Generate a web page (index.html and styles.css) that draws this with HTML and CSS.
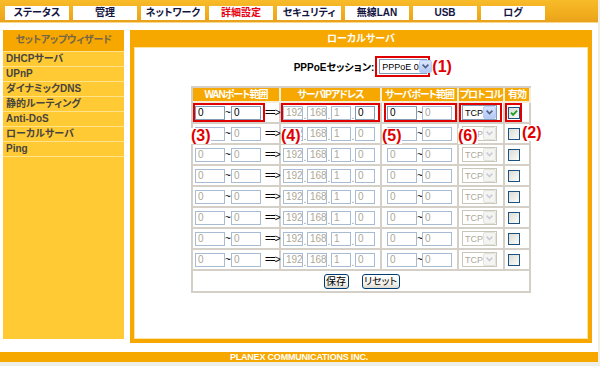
FILE: index.html
```html
<!DOCTYPE html>
<html lang="ja">
<head>
<meta charset="utf-8">
<title>ローカルサーバ</title>
<link rel="stylesheet" href="styles.css">
</head>
<body>
<div class="page">
  <header class="topbar">
    <nav class="tabs">
      <span class="tab">ステータス</span>
      <span class="tab">管理</span>
      <span class="tab">ネットワーク</span>
      <span class="tab on">詳細設定</span>
      <span class="tab">セキュリティ</span>
      <span class="tab">無線LAN</span>
      <span class="tab">USB</span>
      <span class="tab">ログ</span>
    </nav>
  </header>

  <div class="main">
    <aside class="sidebar">
      <div class="side-head">セットアップウィザード</div>
      <div class="side-item">DHCPサーバ</div>
      <div class="side-item">UPnP</div>
      <div class="side-item">ダイナミックDNS</div>
      <div class="side-item">静的ルーティング</div>
      <div class="side-item">Anti-DoS</div>
      <div class="side-item">ローカルサーバ</div>
      <div class="side-item">Ping</div>
      <div class="side-item"></div>
    </aside>

    <section class="panel">
      <div class="panel-head">ローカルサーバ</div>
      <div class="panel-body">
        <div class="session">
          <span class="session-label">PPPoEセッション:</span>
          <span class="grp red sess">
            <span class="sel w48"><span class="sel-t">PPPoE 0</span><span class="sel-b"><svg width="7" height="5" viewBox="0 0 7 5"><path d="M0.6 0.6 L3.5 3.5 L6.4 0.6" fill="none" stroke="#4d6185" stroke-width="1.6"/></svg></span></span>
            <span class="anno a1">(1)</span>
          </span>
        </div>

        <div class="tbl-wrap">
          <table class="tbl">
            <colgroup>
              <col class="c-wan"><col class="c-ip"><col class="c-port"><col class="c-proto"><col class="c-en">
            </colgroup>
            <thead>
              <tr>
                <th>WANポート範囲</th>
                <th>サーバIPアドレス</th>
                <th>サーバポート範囲</th>
                <th>プロトコル</th>
                <th>有効</th>
              </tr>
            </thead>
            <tbody>
              <tr>
                <td><div class="cell"><span class="grp wan red"><input class="f w30" value="0"><span class="tl">~</span><input class="f w30" value="0"></span><span class="arr">==&gt;</span></div></td>
                <td><div class="cell"><span class="grp ip red"><input class="f w20 dis" value="192" disabled><span class="dot">.</span><input class="f w20 dis" value="168" disabled><span class="dot">.</span><input class="f w20 dis" value="1" disabled><span class="dot">.</span><input class="f w20" value="0"></span></div></td>
                <td><div class="cell"><span class="grp pt red"><input class="f w30" value="0"><span class="tl">~</span><input class="f w30 dis" value="0" disabled></span></div></td>
                <td><div class="cell"><span class="grp pr red"><span class="sel w35"><span class="sel-t">TCP</span><span class="sel-b"><svg width="7" height="5" viewBox="0 0 7 5"><path d="M0.6 0.6 L3.5 3.5 L6.4 0.6" fill="none" stroke="#4d6185" stroke-width="1.6"/></svg></span></span></span></div></td>
                <td><div class="cell"><span class="grp cbg red"><span class="cb"><svg width="10" height="10" viewBox="0 0 10 10"><path d="M2 4.6 L4.1 6.8 L8 2.6" fill="none" stroke="#21a121" stroke-width="1.9"/></svg></span></span></div></td>
              </tr>
              <tr>
                <td><div class="cell"><span class="grp wan"><input class="f w30 dis" value="0" disabled><span class="tl">~</span><input class="f w30 dis" value="0" disabled></span><span class="arr">==&gt;</span></div></td>
                <td><div class="cell"><span class="grp ip"><input class="f w20 dis" value="192" disabled><span class="dot">.</span><input class="f w20 dis" value="168" disabled><span class="dot">.</span><input class="f w20 dis" value="1" disabled><span class="dot">.</span><input class="f w20 dis" value="0" disabled></span></div></td>
                <td><div class="cell"><span class="grp pt"><input class="f w30 dis" value="0" disabled><span class="tl">~</span><input class="f w30 dis" value="0" disabled></span></div></td>
                <td><div class="cell"><span class="grp pr"><span class="sel w35 dis"><span class="sel-t">TCP</span><span class="sel-b"><svg width="7" height="5" viewBox="0 0 7 5"><path d="M0.6 0.6 L3.5 3.5 L6.4 0.6" fill="none" stroke="#c9ccd6" stroke-width="1.6"/></svg></span></span></span></div></td>
                <td><div class="cell"><span class="grp cbg"><span class="cb"></span></span></div></td>
              </tr>
              <tr>
                <td><div class="cell"><span class="grp wan"><input class="f w30 dis" value="0" disabled><span class="tl">~</span><input class="f w30 dis" value="0" disabled></span><span class="arr">==&gt;</span></div></td>
                <td><div class="cell"><span class="grp ip"><input class="f w20 dis" value="192" disabled><span class="dot">.</span><input class="f w20 dis" value="168" disabled><span class="dot">.</span><input class="f w20 dis" value="1" disabled><span class="dot">.</span><input class="f w20 dis" value="0" disabled></span></div></td>
                <td><div class="cell"><span class="grp pt"><input class="f w30 dis" value="0" disabled><span class="tl">~</span><input class="f w30 dis" value="0" disabled></span></div></td>
                <td><div class="cell"><span class="grp pr"><span class="sel w35 dis"><span class="sel-t">TCP</span><span class="sel-b"><svg width="7" height="5" viewBox="0 0 7 5"><path d="M0.6 0.6 L3.5 3.5 L6.4 0.6" fill="none" stroke="#c9ccd6" stroke-width="1.6"/></svg></span></span></span></div></td>
                <td><div class="cell"><span class="grp cbg"><span class="cb"></span></span></div></td>
              </tr>
              <tr>
                <td><div class="cell"><span class="grp wan"><input class="f w30 dis" value="0" disabled><span class="tl">~</span><input class="f w30 dis" value="0" disabled></span><span class="arr">==&gt;</span></div></td>
                <td><div class="cell"><span class="grp ip"><input class="f w20 dis" value="192" disabled><span class="dot">.</span><input class="f w20 dis" value="168" disabled><span class="dot">.</span><input class="f w20 dis" value="1" disabled><span class="dot">.</span><input class="f w20 dis" value="0" disabled></span></div></td>
                <td><div class="cell"><span class="grp pt"><input class="f w30 dis" value="0" disabled><span class="tl">~</span><input class="f w30 dis" value="0" disabled></span></div></td>
                <td><div class="cell"><span class="grp pr"><span class="sel w35 dis"><span class="sel-t">TCP</span><span class="sel-b"><svg width="7" height="5" viewBox="0 0 7 5"><path d="M0.6 0.6 L3.5 3.5 L6.4 0.6" fill="none" stroke="#c9ccd6" stroke-width="1.6"/></svg></span></span></span></div></td>
                <td><div class="cell"><span class="grp cbg"><span class="cb"></span></span></div></td>
              </tr>
              <tr>
                <td><div class="cell"><span class="grp wan"><input class="f w30 dis" value="0" disabled><span class="tl">~</span><input class="f w30 dis" value="0" disabled></span><span class="arr">==&gt;</span></div></td>
                <td><div class="cell"><span class="grp ip"><input class="f w20 dis" value="192" disabled><span class="dot">.</span><input class="f w20 dis" value="168" disabled><span class="dot">.</span><input class="f w20 dis" value="1" disabled><span class="dot">.</span><input class="f w20 dis" value="0" disabled></span></div></td>
                <td><div class="cell"><span class="grp pt"><input class="f w30 dis" value="0" disabled><span class="tl">~</span><input class="f w30 dis" value="0" disabled></span></div></td>
                <td><div class="cell"><span class="grp pr"><span class="sel w35 dis"><span class="sel-t">TCP</span><span class="sel-b"><svg width="7" height="5" viewBox="0 0 7 5"><path d="M0.6 0.6 L3.5 3.5 L6.4 0.6" fill="none" stroke="#c9ccd6" stroke-width="1.6"/></svg></span></span></span></div></td>
                <td><div class="cell"><span class="grp cbg"><span class="cb"></span></span></div></td>
              </tr>
              <tr>
                <td><div class="cell"><span class="grp wan"><input class="f w30 dis" value="0" disabled><span class="tl">~</span><input class="f w30 dis" value="0" disabled></span><span class="arr">==&gt;</span></div></td>
                <td><div class="cell"><span class="grp ip"><input class="f w20 dis" value="192" disabled><span class="dot">.</span><input class="f w20 dis" value="168" disabled><span class="dot">.</span><input class="f w20 dis" value="1" disabled><span class="dot">.</span><input class="f w20 dis" value="0" disabled></span></div></td>
                <td><div class="cell"><span class="grp pt"><input class="f w30 dis" value="0" disabled><span class="tl">~</span><input class="f w30 dis" value="0" disabled></span></div></td>
                <td><div class="cell"><span class="grp pr"><span class="sel w35 dis"><span class="sel-t">TCP</span><span class="sel-b"><svg width="7" height="5" viewBox="0 0 7 5"><path d="M0.6 0.6 L3.5 3.5 L6.4 0.6" fill="none" stroke="#c9ccd6" stroke-width="1.6"/></svg></span></span></span></div></td>
                <td><div class="cell"><span class="grp cbg"><span class="cb"></span></span></div></td>
              </tr>
              <tr>
                <td><div class="cell"><span class="grp wan"><input class="f w30 dis" value="0" disabled><span class="tl">~</span><input class="f w30 dis" value="0" disabled></span><span class="arr">==&gt;</span></div></td>
                <td><div class="cell"><span class="grp ip"><input class="f w20 dis" value="192" disabled><span class="dot">.</span><input class="f w20 dis" value="168" disabled><span class="dot">.</span><input class="f w20 dis" value="1" disabled><span class="dot">.</span><input class="f w20 dis" value="0" disabled></span></div></td>
                <td><div class="cell"><span class="grp pt"><input class="f w30 dis" value="0" disabled><span class="tl">~</span><input class="f w30 dis" value="0" disabled></span></div></td>
                <td><div class="cell"><span class="grp pr"><span class="sel w35 dis"><span class="sel-t">TCP</span><span class="sel-b"><svg width="7" height="5" viewBox="0 0 7 5"><path d="M0.6 0.6 L3.5 3.5 L6.4 0.6" fill="none" stroke="#c9ccd6" stroke-width="1.6"/></svg></span></span></span></div></td>
                <td><div class="cell"><span class="grp cbg"><span class="cb"></span></span></div></td>
              </tr>
              <tr>
                <td><div class="cell"><span class="grp wan"><input class="f w30 dis" value="0" disabled><span class="tl">~</span><input class="f w30 dis" value="0" disabled></span><span class="arr">==&gt;</span></div></td>
                <td><div class="cell"><span class="grp ip"><input class="f w20 dis" value="192" disabled><span class="dot">.</span><input class="f w20 dis" value="168" disabled><span class="dot">.</span><input class="f w20 dis" value="1" disabled><span class="dot">.</span><input class="f w20 dis" value="0" disabled></span></div></td>
                <td><div class="cell"><span class="grp pt"><input class="f w30 dis" value="0" disabled><span class="tl">~</span><input class="f w30 dis" value="0" disabled></span></div></td>
                <td><div class="cell"><span class="grp pr"><span class="sel w35 dis"><span class="sel-t">TCP</span><span class="sel-b"><svg width="7" height="5" viewBox="0 0 7 5"><path d="M0.6 0.6 L3.5 3.5 L6.4 0.6" fill="none" stroke="#c9ccd6" stroke-width="1.6"/></svg></span></span></span></div></td>
                <td><div class="cell"><span class="grp cbg"><span class="cb"></span></span></div></td>
              </tr>
              <tr>
                <td colspan="5" class="btn-row"><div class="btns"><span class="btn b-save">保存</span><span class="btn b-reset">リセット</span></div></td>
              </tr>
            </tbody>
          </table>
          <span class="anno a3">(3)</span>
          <span class="anno a4">(4)</span>
          <span class="anno a5">(5)</span>
          <span class="anno a6">(6)</span>
          <span class="anno a2">(2)</span>
        </div>
      </div>
    </section>
  </div>

  <footer class="footer">PLANEX COMMUNICATIONS INC.</footer>
</div>
</body>
</html>
```

FILE: styles.css
```css
* { box-sizing: border-box; }

html { background: #eeeee8; }

body {
  margin: 0;
  font-family: "Liberation Sans", "Noto Sans CJK JP", sans-serif;
  font-size: 10px;
  font-feature-settings: "palt" 1;
  color: #000;
}

.page {
  width: 598px;
  height: 362px;
  background: #fff;
  display: flex;
  flex-direction: column;
}

/* top bar */
.topbar {
  height: 23px;
  background: linear-gradient(#f8bb2a, #f0ab1c 70%, #e9a11d);
  border-bottom: 1px solid #f8d98a;
  padding: 6px 0 0 5px;
}
.tabs { display: flex; gap: 4px; }
.tab {
  width: 64px;
  height: 14px;
  background: #fff;
  color: #141440;
  font-weight: bold;
  text-align: center;
  line-height: 14px;
}
.tab.on { color: #e60012; }

/* main area */
.main {
  display: flex;
  margin-top: 7px;
  padding-left: 3px;
  height: 313px;
}

.sidebar {
  width: 121px;
  height: 309px;
  background: #ffca33;
}
.side-head {
  height: 21px;
  background: #f6a800;
  color: #776548;
  font-weight: bold;
  text-align: center;
  line-height: 20px;
  letter-spacing: -0.3px;
}
.side-item {
  height: 15px;
  border-top: 1px solid #ffe38c;
  padding-left: 3px;
  line-height: 14px;
  color: #474440;
  font-weight: bold;
}

.panel {
  margin-left: 6px;
  width: 462px;
  background: #f6a800;
  padding: 0 4px 4px;
  display: flex;
  flex-direction: column;
}
.panel-head {
  height: 17px;
  color: #fff;
  font-weight: bold;
  text-align: center;
  line-height: 17px;
}
.panel-body {
  flex: 1;
  background: #fff;
  border: 1px solid #fde4a2;
  padding-top: 8px;
  display: flex;
  flex-direction: column;
  align-items: center;
}

/* session row */
.session {
  display: flex;
  align-items: center;
  height: 21px;
  margin-left: 2px;
}
.session-label { font-weight: bold; margin-right: 1px; white-space: nowrap; }
.grp.sess {
  position: relative;
  height: 21px;
  padding: 0 1px 0 2px;
}

/* red marks */
.grp {
  display: inline-flex;
  align-items: center;
  height: 19px;
  border: 2px solid transparent;
}
.grp.red { border-color: #e00000; }
.grp.wan { padding: 0 2px 0 0; }
.grp.ip { padding: 0 3px 0 0; }
.grp.pt { margin-left: 2px; padding: 0 3px 0 1px; }
.grp.pr { padding: 0 3px 0 1px; }
.grp.cbg { padding: 0 0 0 1px; }

.anno {
  position: absolute;
  color: #e00000;
  font-family: "Liberation Sans", sans-serif;
  font-weight: bold;
  font-size: 16px;
  line-height: 16px;
  background: #fff;
  white-space: nowrap;
}
.a1 { left: calc(100% + 4px); top: 1px; background: none; }

.tbl-wrap {
  position: relative;
  margin-top: 9px;
  width: 340px;
}
.a3 { left: 0; top: 42px; }
.a4 { left: 90px; top: 42px; }
.a5 { left: 191px; top: 42px; }
.a6 { left: 267px; top: 42px; }
.a2 { left: 331px; top: 39px; }

/* table */
.tbl {
  width: 340px;
  table-layout: fixed;
  border-collapse: separate;
  border-spacing: 0;
  border-left: 2px solid #d4d0c8;
  border-top: 2px solid #d4d0c8;
}
.c-wan { width: 88px; }
.c-ip { width: 101px; }
.c-port { width: 77px; }
.c-proto { width: 46px; }
.c-en { width: 26px; }

.tbl th, .tbl td {
  padding: 0;
  border-right: 2px solid #d4d0c8;
  border-bottom: 2px solid #d4d0c8;
}
.tbl th {
  height: 15px;
  background: #f6a800;
  color: #fff;
  font-weight: bold;
  font-size: 10px;
  line-height: 13px;
  letter-spacing: -1px;
  border-color: #f6eedb;
  white-space: nowrap;
  overflow: hidden;
}
.tbl td { height: 21px; }

.cell {
  display: flex;
  align-items: center;
  height: 19px;
  white-space: nowrap;
}

.f {
  height: 14px;
  border: 1px solid #7f9db9;
  background: #fff;
  color: #000;
  font-family: "Liberation Sans", sans-serif;
  font-size: 10px;
  padding: 0 0 0 2px;
  margin: 0;
  outline: none;
  flex-shrink: 0;
}
.f.dis {
  color: #aca899;
  border-color: #a7bcd3;
  background: #fff;
}
.w30 { width: 30px; }
.w20 { width: 20px; }

.tl {
  width: 6px;
  text-align: center;
  font-size: 10px;
  line-height: 10px;
}
.grp.pt .tl { width: 5px; }
.dot {
  width: 4px;
  text-align: center;
  align-self: flex-end;
  line-height: 8px;
  color: #8c8c8c;
}
.arr {
  letter-spacing: -1px;
  font-size: 10px;
}

/* select */
.sel {
  display: inline-flex;
  align-items: center;
  justify-content: space-between;
  height: 15px;
  border: 1px solid #7f9db9;
  background: #fff;
  font-family: "Liberation Sans", sans-serif;
  font-size: 9px;
  white-space: nowrap;
}
.w35 { width: 35px; }
.w48 { width: 48px; }
.sel-t { padding-left: 2px; }
.sel-b {
  flex-shrink: 0;
  width: 13px;
  height: 13px;
  border: 1px solid #b9cdf7;
  border-radius: 2px;
  background: linear-gradient(#dbe6fe, #b2c7f4);
  display: flex;
  align-items: center;
  justify-content: center;
}
.sel.dis { border-color: #c9c7ba; color: #aca899; }
.sel.dis .sel-b {
  border-color: #e3e3dd;
  background: #f4f4f0;
}

/* checkbox */
.cb {
  width: 12px;
  height: 12px;
  border: 1px solid #1c5180;
  background: linear-gradient(135deg, #dcdcd5, #fbfbf9);
  display: flex;
  align-items: center;
  justify-content: center;
}

/* buttons */
.btn-row { height: 22px; }
.btns {
  display: flex;
  justify-content: center;
  align-items: center;
  gap: 13px;
  height: 20px;
  padding-left: 1px;
}
.btn {
  height: 15px;
  border: 1px solid #003c74;
  border-radius: 3px;
  background: linear-gradient(#ffffff, #f0efe8 70%, #dcdad0);
  font-size: 10px;
  line-height: 13px;
  text-align: center;
}
.b-save { width: 25px; }
.b-reset { width: 38px; }

/* footer */
.footer {
  margin-top: 9px;
  height: 10px;
  background: #f6a800;
  color: #fff;
  font-weight: bold;
  font-size: 9px;
  line-height: 10px;
  text-align: center;
  letter-spacing: -0.2px;
}
```
